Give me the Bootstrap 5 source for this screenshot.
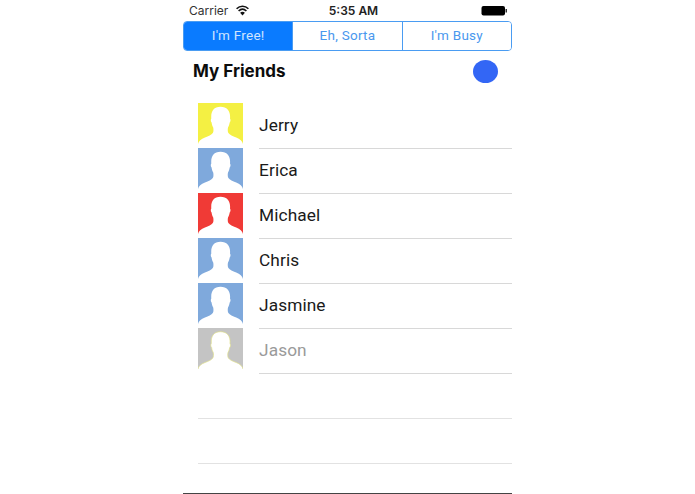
<!DOCTYPE html>
<html lang="en">
<head>
<meta charset="utf-8">
<title>My Friends</title>
<link rel="stylesheet" href="https://cdn.jsdelivr.net/npm/bootstrap@5.3.0/dist/css/bootstrap.min.css">
<style>
html,body{height:494px;overflow:hidden;background:#fff;}
body{font-family:Inter,Roboto,"Liberation Sans",sans-serif;color:#111;}
.phone{width:329px;height:494px;margin-left:183px;border-bottom:1px solid #444;}
.statusbar{height:21px;padding:0 5px 0 6px;color:#333;}
.statusbar .carrier{width:119px;font-family:Inter,sans-serif;font-size:12px;}
.clock{width:91px;font-weight:600;font-size:12px;text-align:center;color:#222;}
.seg{height:30px;border:1px solid #4a9cf2;border-radius:4px;overflow:hidden;}
.seg-item{flex:1 1 0;font-family:Roboto,sans-serif;font-size:13.5px;color:#4a98ee;background:#fff;letter-spacing:.25px;padding-bottom:2px;}
.seg-item+.seg-item{border-left:1px solid #4a9cf2;}
.seg-item.on{background:#0a7bff;color:#cfe5ff;}
.head{height:40px;padding:0 14px 0 10px;}
.head h1{font-size:17px;font-weight:700;margin:0;color:#0c0c0c;font-family:Inter,sans-serif;}
.dot{width:25px;height:23px;border-radius:50%;background:#3366f5;}
.rows{padding:12px 0 0 15px;}
.frow{height:45px;}
.pic{width:45px;height:45px;flex:none;display:block;}
.pic-c1{background:#f4f043;}
.pic-c2{background:#7fa9dc;}
.pic-c3{background:#f03a36;}
.pic-c4{background:#c4c4c4;stroke:#dfe08a;stroke-width:.7;}
.fname{flex:1;margin-left:16px;height:45px;box-shadow:0 1px 0 #d8d8d8;font-family:Roboto,sans-serif;font-size:17.3px;padding-top:10px;letter-spacing:.1px;color:#1a1a1a;line-height:25px;}
.fade-name{color:#9a9a9a;}
.blank{height:45px;box-shadow:0 1px 0 #e2e2e2;}
</style>
</head>
<body>
<svg width="0" height="0" class="position-absolute">
<defs>
<symbol id="man" viewBox="0 0 45 45">
<path fill="#fff" d="M-1 47V41H0C.6 38 3 36 7 34.500C10.500 33.200 13.500 32 14.800 30C15.600 28.600 15.600 26.500 15.200 24.500C14.200 23 13.800 21.300 13.600 19.500C12.700 19 12.500 16.500 13.300 15.500C12.700 8.500 15.500 3.700 22.500 3.700C29.500 3.700 32.700 8.500 32 15.500C32.800 16.500 32.600 19 31.700 19.500C31.400 21.300 31 23 30 24.500C29.600 26.500 29.600 28.600 30.400 30C31.700 32 34.700 33.200 38.200 34.500C42 36 44.400 38 45 41H46V47Z"/>
</symbol>
</defs>
</svg>
<div class="phone">
<div class="statusbar d-flex align-items-center">
<div class="carrier d-flex align-items-center">Carrier
<svg width="13" height="11" viewBox="0 0 13 11" class="ms-2"><path fill="none" stroke="#111" stroke-width="1.600" d="M.6 3.800C4 .4 9 .4 12.400 3.800M2.600 6C5 3.700 8 3.700 10.400 6"/><path fill="#111" d="M4.100 7.700C5.600 6.300 7.400 6.300 8.900 7.700L6.500 10.500Z"/></svg>
</div>
<div class="clock">5:35 AM</div>
<div class="flex-grow-1 d-flex justify-content-end">
<svg width="26" height="11" viewBox="0 0 26 11"><rect x=".5" y="1" width="23.500" height="9.500" rx="2" fill="#000"/><rect x="24.500" y="4" width="1.500" height="3.500" fill="#333"/></svg>
</div>
</div>
<div class="seg d-flex">
<div class="seg-item on d-flex align-items-center justify-content-center">I'm Free!</div>
<div class="seg-item d-flex align-items-center justify-content-center">Eh, Sorta</div>
<div class="seg-item d-flex align-items-center justify-content-center">I'm Busy</div>
</div>
<div class="head d-flex align-items-center justify-content-between">
<h1>My Friends</h1>
<div class="dot"></div>
</div>
<div class="rows">
<div class="frow d-flex"><svg class="pic pic-c1"><use href="#man"/></svg><div class="fname">Jerry</div></div>
<div class="frow d-flex"><svg class="pic pic-c2"><use href="#man"/></svg><div class="fname">Erica</div></div>
<div class="frow d-flex"><svg class="pic pic-c3"><use href="#man"/></svg><div class="fname">Michael</div></div>
<div class="frow d-flex"><svg class="pic pic-c2"><use href="#man"/></svg><div class="fname">Chris</div></div>
<div class="frow d-flex"><svg class="pic pic-c2"><use href="#man"/></svg><div class="fname">Jasmine</div></div>
<div class="frow d-flex"><svg class="pic pic-c4"><use href="#man"/></svg><div class="fname fade-name">Jason</div></div>
<div class="blank"></div>
<div class="blank"></div>
</div>
</div>
</body>
</html>
